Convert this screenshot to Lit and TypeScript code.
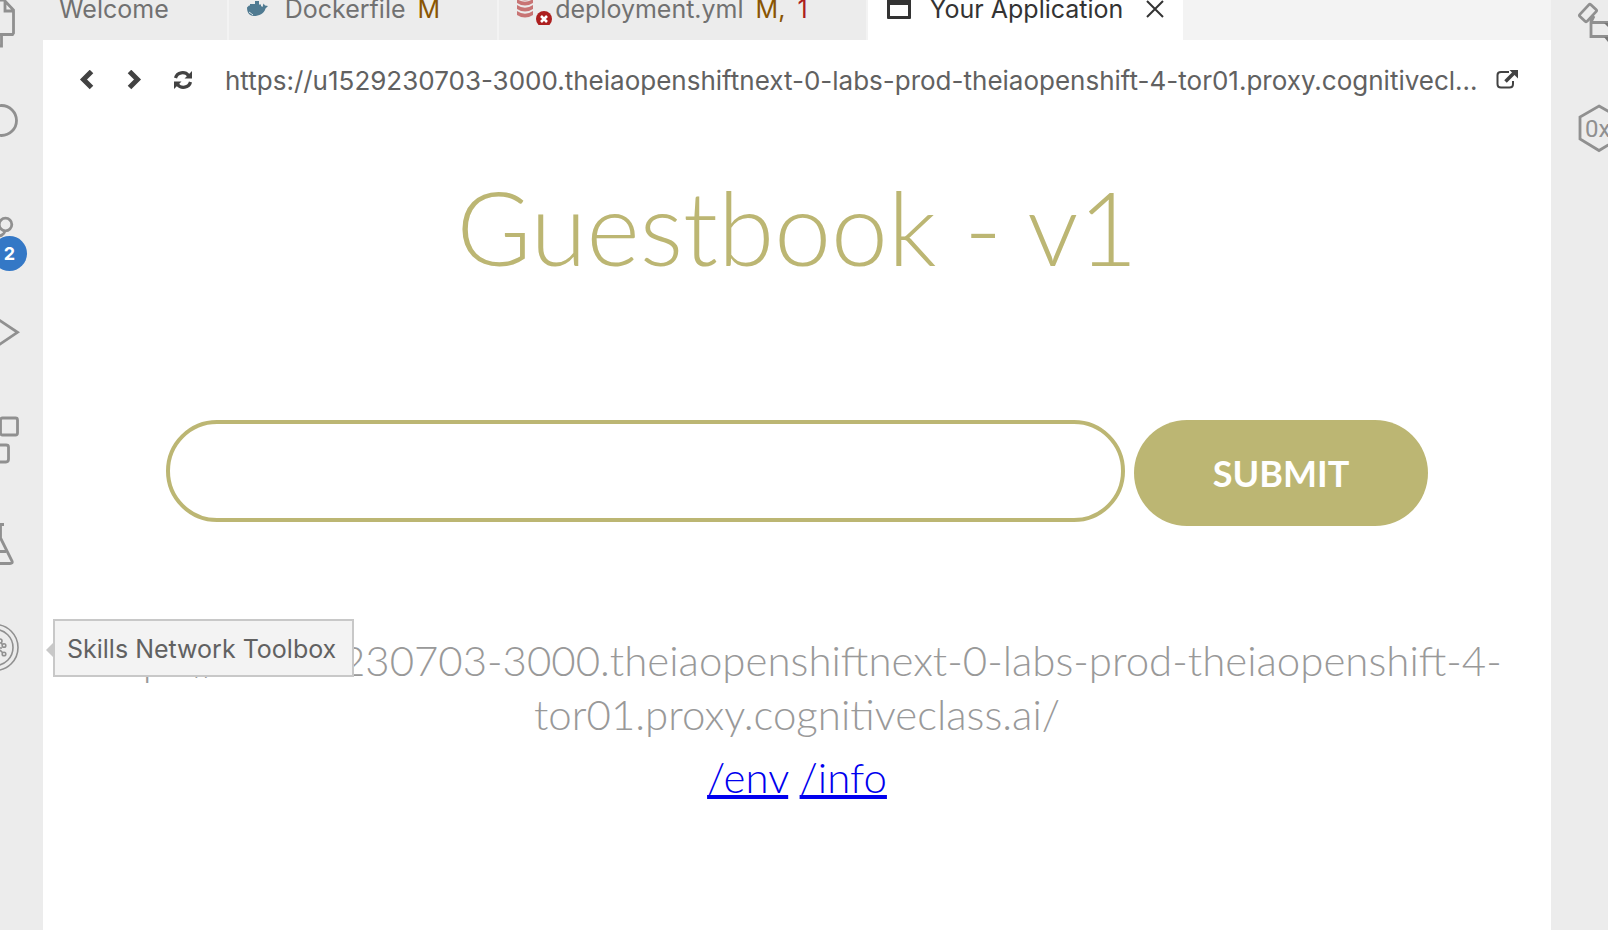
import { LitElement, html, svg, css } from "lit";
import { customElement, state } from "lit/decorators.js";

const HOST = "u1529230703-3000.theiaopenshiftnext-0-labs-prod-theiaopenshift-4-tor01.proxy.cognitiveclass.ai/";

interface RailItem {
  label: string;
  art: unknown;
  badge?: number;
}

const LEFT_ITEMS: RailItem[] = [
  {
    label: "Explorer",
    art: svg`<path d="M-14 33V72.500H12.500L13.500 71V48L4 38H-14M5 36V49H14M1.500 72V84H-20" />`,
  },
  { label: "Search", art: svg`<circle cx="1.500" cy="52.500" r="15" /><path d="M-9 63L-22 77" />` },
  {
    label: "Source Control",
    badge: 2,
    art: svg`<circle cx="5.500" cy="50.500" r="6.300" /><path d="M5 57C4 61 1 62 -6 63" />`,
  },
  { label: "Run", art: svg`<path d="M-16 30L17.500 52.300L-16 75Z" />` },
  {
    label: "Extensions",
    art: svg`<rect x="0.500" y="32" width="17" height="17" rx="2" /><path d="M-10 59H6Q8.500 59 8.500 61V73Q8.500 76 6 76H-10" />`,
  },
  {
    label: "Testing",
    art: svg`<path d="M-12 32.500H4M0.500 33V46L12 69Q13 71.500 10 71.500H-20M-8 59.500H6" />`,
  },
  {
    label: "Skills Network Toolbox",
    art: svg`<g stroke-width="1.600"><circle cx="-5" cy="49.500" r="23" /><circle cx="-5" cy="49.500" r="18" />
      <circle cx="0" cy="43" r="2" /><circle cx="4" cy="47.500" r="1.800" /><circle cx="4" cy="56" r="1.800" /><path d="M-3 50H2M0 52L3 55M1 45L3 47" /></g>`,
  },
];

@customElement("activity-rail")
class ActivityRail extends LitElement {
  static styles = css`
    :host {
      display: block;
      width: 43px;
      flex: none;
      overflow: hidden;
      background: #ececec;
    }
    nav {
      display: flex;
      flex-direction: column;
      margin-top: -38px;
    }
    button {
      display: block;
      position: relative;
      height: 106px;
      width: 100%;
      padding: 0;
      border: 0;
      background: none;
    }
    svg {
      display: block;
      fill: none;
      stroke: #909090;
      stroke-width: 2.8;
    }
    .badge {
      position: absolute;
      left: -8px;
      top: 62px;
      width: 35px;
      height: 35px;
      border-radius: 50%;
      background: #3478c6;
      color: #fff;
      font: 700 18px/35px Inter, sans-serif;
      text-align: center;
    }
  `;
  render() {
    return html`<nav aria-label="Activity bar">
      ${LEFT_ITEMS.map(
        (item) => html`<button aria-label=${item.label}>
          <svg width="43" height="106" viewBox="0 0 43 106">${item.art}</svg>
          ${item.badge ? html`<span class="badge">${item.badge}</span>` : ""}
        </button>`
      )}
    </nav>`;
  }
}

@customElement("tool-rail")
class ToolRail extends LitElement {
  static styles = css`
    :host {
      display: block;
      width: 57px;
      flex: none;
      overflow: hidden;
      background: #ececec;
    }
    nav {
      display: flex;
      flex-direction: column;
      margin-top: -31px;
    }
    button {
      height: 106px;
      padding: 0;
      border: 0;
      background: none;
    }
    svg {
      display: block;
      fill: none;
      stroke: #909090;
      stroke-width: 2.8;
    }
    text {
      fill: #909090;
      stroke: none;
      font: 400 24px Roboto, sans-serif;
    }
    .dark {
      fill: #777;
      stroke: none;
    }
  `;
  render() {
    return html`<nav aria-label="Side tools">
      <button aria-label="Debug tools">
        <svg width="57" height="106" viewBox="0 0 57 106">
          <rect x="29" y="39" width="16" height="10" rx="1.500" transform="rotate(-47 37 44)" />
          <path d="M40 48V67.500H60M40 53.500H60M40 53L43 47" />
          <path class="dark" d="M53 54H57V58ZM53 68H57V73Z" />
        </svg>
      </button>
      <button aria-label="Hex viewer">
        <svg width="57" height="106" viewBox="0 0 57 106">
          <path d="M48 31L67 42V64L48 75.500L29 64V42Z" />
          <text x="34" y="62">0x</text>
        </svg>
      </button>
    </nav>`;
  }
}

@customElement("editor-tabs")
class EditorTabs extends LitElement {
  static styles = css`
    :host {
      display: flex;
      align-items: flex-end;
      height: 40px;
      overflow: hidden;
      background: #f3f3f3;
      font: 25px/32px Inter, sans-serif;
      color: #717171;
    }
    .tab {
      display: flex;
      align-items: center;
      box-sizing: border-box;
      height: 62px;
      padding: 0 16px;
      border-right: 2px solid #f3f3f3;
      background: #ececec;
      white-space: nowrap;
    }
    .first {
      padding-right: 58px;
    }
    .docker {
      padding: 0 57px 0 18px;
    }
    .deploy {
      padding: 0 58px 0 18px;
    }
    .active {
      padding: 0 18px;
      border: 0;
      background: #fff;
      color: #333;
    }
    svg {
      display: block;
      flex: none;
    }
    .whale {
      margin-right: 16px;
    }
    .window {
      margin-right: 18px;
    }
    .mod {
      margin-left: 12px;
      color: #895503;
    }
    .err {
      margin-left: 12px;
      color: #ad1f1f;
    }
    .close {
      margin-left: 22px;
      padding: 0;
      border: 0;
      background: none;
    }
  `;
  render() {
    return html`
      <div class="tab first">Welcome</div>
      <div class="tab docker">
        <svg class="whale" width="22" height="16" viewBox="0 0 22 16">
          <path fill="#4f7a91" d="M0 6.500L2 4.500H3V3H8V0H12V3.500H14V5L15.500 6L16.500 2.500L18 4.500L21 5L18.500 7.500C17 13 12 15 7 15C2 15 0 11 0 6.500Z" />
          <path d="M2 11Q5 13 6 14" fill="none" stroke="#dde6ea" />
        </svg>
        Dockerfile<span class="mod">M</span>
      </div>
      <div class="tab deploy">
        <svg width="38" height="32" viewBox="0 0 38 32">
          <g fill="#c87474">
            <ellipse cx="8" cy="4" rx="8" ry="3.500" />
            <path d="M0 6Q8 11.500 16 6V10Q8 15 0 10ZM0 12Q8 17.500 16 12V16Q8 21 0 16ZM0 18Q8 23.500 16 18V22Q8 27 0 22Z" />
          </g>
          <circle cx="27" cy="26" r="8" fill="#ad1f1f" />
          <path d="M24 23L30 29M30 23L24 29" stroke="#fff" stroke-width="2.600" />
        </svg>
        deployment.yml<span class="mod">M,</span><span class="err">1</span>
      </div>
      <div class="tab active">
        <svg class="window" width="26" height="26" viewBox="0 0 26 26">
          <path fill="#333" fill-rule="evenodd" d="M2 2H24Q25 2 25 3V22Q25 23 24 23H2Q1 23 1 22V3Q1 2 2 2ZM4 9V20H22V9Z" />
        </svg>
        Your Application
        <button class="close" aria-label="Close tab">
          <svg width="20" height="20" viewBox="0 0 20 20">
            <path d="M2 2L18 18M18 2L2 18" stroke="#333" stroke-width="2" />
          </svg>
        </button>
      </div>
    `;
  }
}

@customElement("preview-bar")
class PreviewBar extends LitElement {
  static styles = css`
    :host {
      display: flex;
      align-items: center;
      height: 80px;
      padding: 0 32px 0 20px;
      background: #fff;
    }
    button {
      padding: 0;
      border: 0;
      background: none;
    }
    .nav {
      display: flex;
      justify-content: center;
      width: 48px;
      flex: none;
    }
    svg {
      display: block;
      fill: none;
      stroke: #424242;
    }
    .solid {
      fill: #424242;
      stroke: none;
    }
    input {
      flex: 1;
      min-width: 0;
      height: 40px;
      margin: 0 12px 0 18px;
      padding: 0;
      border: 0;
      outline: 0;
      background: none;
      color: #616161;
      font: 26px Inter, sans-serif;
      text-overflow: ellipsis;
    }
  `;
  render() {
    return html`
      <button class="nav" aria-label="Back">
        <svg width="20" height="20" viewBox="0 0 20 20"><path d="M14.500 1.500L6.500 9.500L14.500 17.500" stroke-width="5" /></svg>
      </button>
      <button class="nav" aria-label="Forward">
        <svg width="20" height="20" viewBox="0 0 20 20"><path d="M4.500 1.500L12.500 9.500L4.500 17.500" stroke-width="5" /></svg>
      </button>
      <button class="nav" aria-label="Reload">
        <svg width="20" height="20" viewBox="0 0 20 20">
          <path d="M2.500 8C4 2 12 1 15.500 5.500M17.500 12C16 18 8 19 4.500 14.500" stroke-width="3.200" />
          <path class="solid" d="M19 1V8.500H11.500ZM1 19V11.500H8.500Z" />
        </svg>
      </button>
      <input aria-label="Address" type="text" .value=${"https://" + HOST} />
      <button aria-label="Open in new window">
        <svg width="24" height="22" viewBox="0 0 24 22">
          <path d="M14 3H6Q2.500 3 2.500 6V15Q2.500 18.500 6 18.500H14.500Q18 18.500 18 15V12" stroke-width="2" />
          <path d="M10.500 12.500L19 4" stroke-width="3.600" />
          <path class="solid" d="M14.500 1H23V9.500Z" />
        </svg>
      </button>
    `;
  }
}

@customElement("guest-book")
class GuestBook extends LitElement {
  static styles = css`
    :host {
      display: block;
      padding: 36px 40px 40px;
      font-family: Lato, sans-serif;
      font-weight: 300;
      text-align: center;
      color: #999;
    }
    h1 {
      margin: 0 0 122px;
      color: #bcb673;
      font-size: 102px;
      line-height: 142px;
      font-weight: 300;
    }
    form {
      display: flex;
      align-items: flex-start;
      gap: 9px;
      margin: 0 83px 107px;
    }
    input {
      flex: 1;
      min-width: 0;
      box-sizing: border-box;
      height: 102px;
      padding: 0 40px;
      border: 4px solid #bcb673;
      border-radius: 51px;
      outline: 0;
      background: #fff;
      font: 300 40px Lato, sans-serif;
    }
    form button {
      width: 294px;
      height: 106px;
      padding: 0;
      border: 0;
      border-radius: 53px;
      background: #bcb673;
      color: #fff;
      font: 700 36px Lato, sans-serif;
    }
    p {
      margin: 0;
      font-size: 42px;
      line-height: 54px;
    }
    .links {
      margin-top: 9px;
    }
    a {
      color: #00e;
      text-decoration-thickness: 4px;
    }
  `;
  @state() entry = "";
  render() {
    return html`
      <h1>Guestbook - v1</h1>
      <form @submit=${(e: Event) => e.preventDefault()}>
        <input
          type="text"
          aria-label="Guestbook entry"
          .value=${this.entry}
          @input=${(e: Event) => (this.entry = (e.target as HTMLInputElement).value)}
        />
        <button type="submit">SUBMIT</button>
      </form>
      <p>https://${HOST}</p>
      <p class="links"><a href="#env">/env</a> <a href="#info">/info</a></p>
    `;
  }
}

@customElement("app-root")
class AppRoot extends LitElement {
  static styles = css`
    :host {
      display: flex;
      position: relative;
      min-height: 100vh;
      background: #fff;
    }
    main {
      flex: 1;
      min-width: 0;
    }
    .tooltip {
      position: absolute;
      left: 53px;
      top: 619px;
      padding: 12px 16px 10px 12px;
      border: 2px solid #c8c8c8;
      background: #f3f3f3;
      color: #616161;
      font: 25px/32px Inter, sans-serif;
      white-space: nowrap;
    }
    .tooltip::before {
      content: "";
      position: absolute;
      right: 100%;
      top: 20px;
      border: 9px solid transparent;
      border-left-width: 0;
      border-right-color: #c8c8c8;
    }
  `;
  render() {
    return html`
      <activity-rail></activity-rail>
      <main>
        <editor-tabs></editor-tabs>
        <preview-bar></preview-bar>
        <guest-book></guest-book>
      </main>
      <tool-rail></tool-rail>
      <div class="tooltip" role="tooltip">Skills Network Toolbox</div>
    `;
  }
}
